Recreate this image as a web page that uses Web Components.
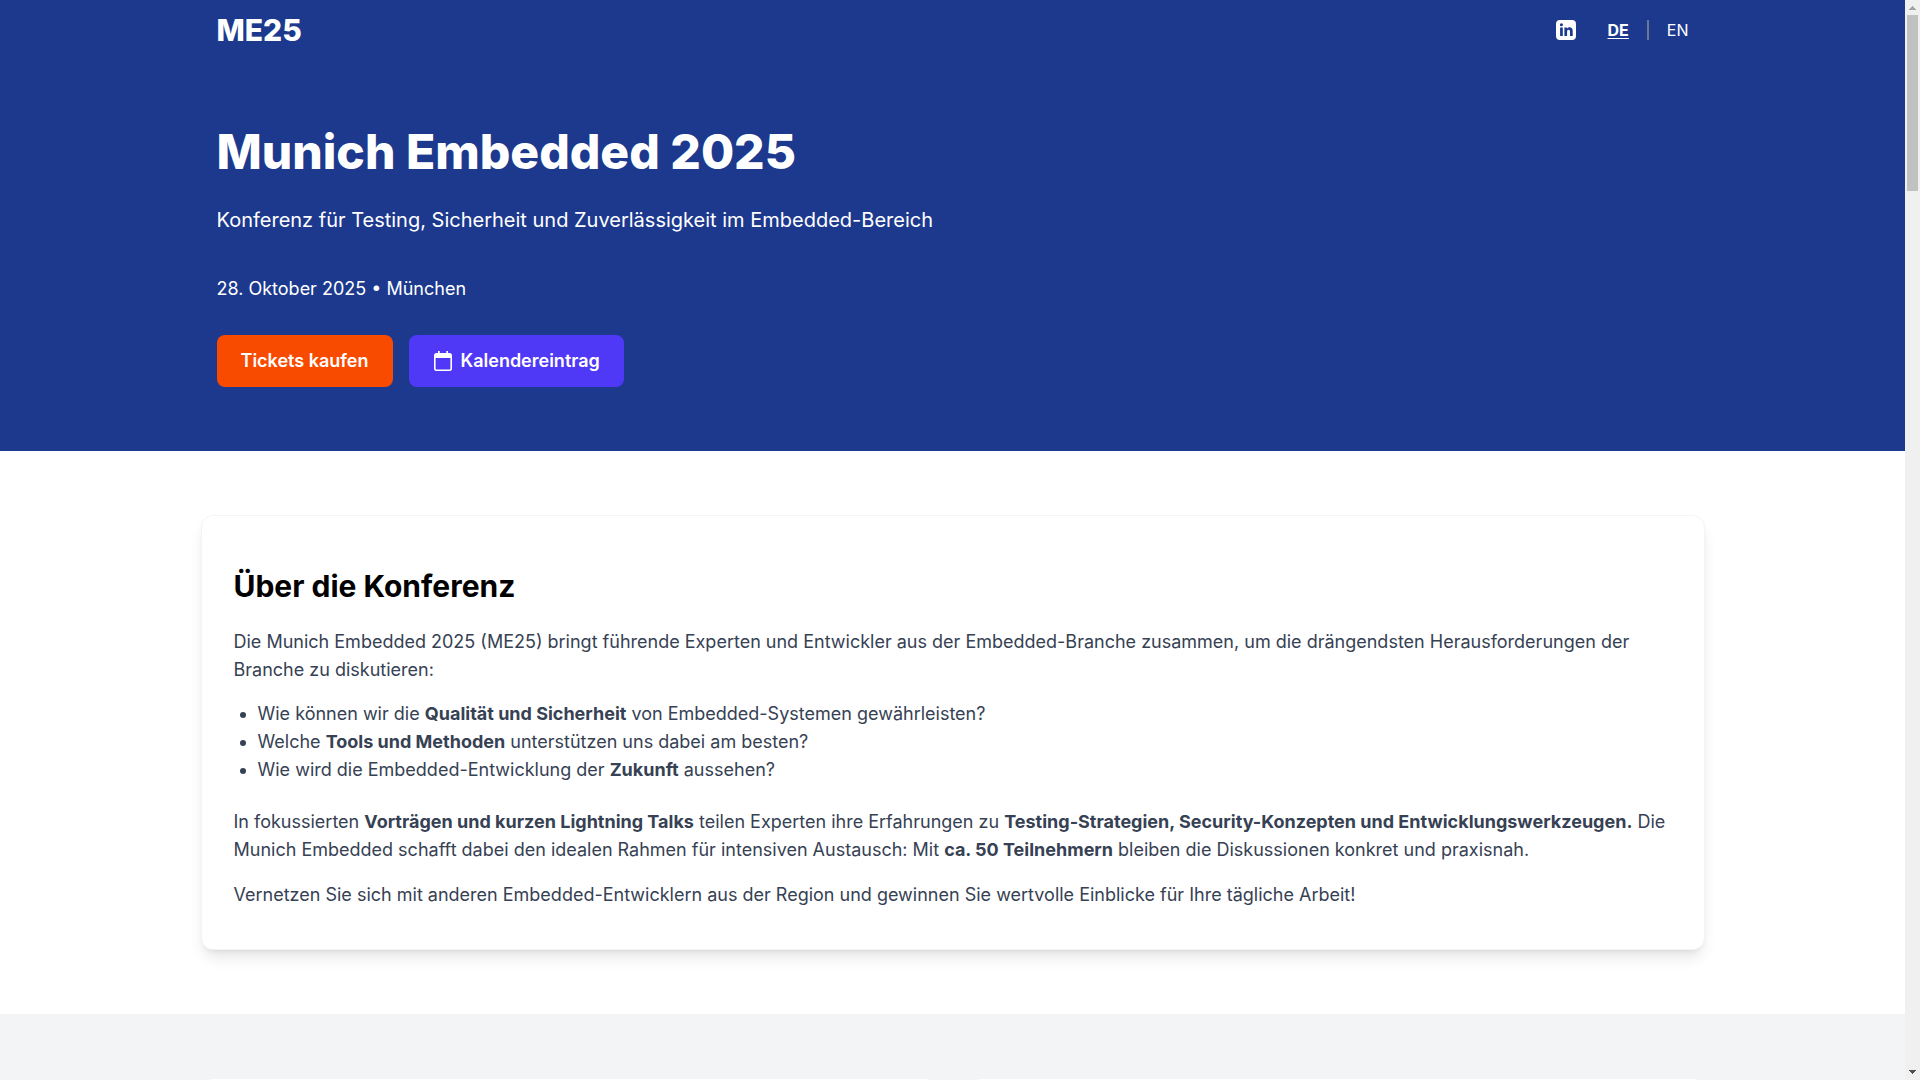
<!DOCTYPE html>
<html lang="de">
<head>
<meta charset="utf-8">
<title>Munich Embedded 2025</title>
<style>
html, body { margin: 0; height: 100%; }
body { font-family: Inter, "Liberation Sans", sans-serif; font-size: 18px; line-height: 28px; background: #fff; overflow: hidden; }
</style>
</head>
<body>
<conference-page></conference-page>
<script>
const define = (name, html) => {
  const template = document.createElement('template');
  template.innerHTML = html;
  customElements.define(name, class extends HTMLElement {
    constructor() {
      super();
      this.attachShadow({ mode: 'open' }).append(template.content.cloneNode(true));
    }
  });
};

define('page-container', `
<style>
:host { display: block; box-sizing: border-box; width: 100%; max-width: 1536px; margin: 0 auto; padding: 0 var(--gutter, 16px); }
</style><slot></slot>`);

define('site-header', `
<style>
:host { display: block; background: #1c398e; color: #fff; --gutter: 32px; }
.bar { display: flex; align-items: center; justify-content: space-between; height: 60px; }
a { color: inherit; text-decoration: none; }
.brand { font-size: 30px; line-height: 36px; font-weight: 800; }
nav { display: flex; align-items: center; gap: 32px; font-size: 16px; line-height: 20px; }
.social, svg { display: block; }
.lang { display: flex; align-items: center; }
.lang a + a { border-left: 2px solid #6a7692; margin-left: 18px; padding-left: 18px; }
.lang a[aria-current] { font-weight: 700; text-decoration: underline; text-underline-offset: 2px; }
</style>
<page-container><div class="bar">
<a class="brand" href="#">ME25</a>
<nav>
<a class="social" href="#" aria-label="LinkedIn"><svg width="20" height="20" viewBox="0 0 20 20"><path fill="#fff" fill-rule="evenodd" d="M4 0h12a4 4 0 0 1 4 4v12a4 4 0 0 1-4 4H4a4 4 0 0 1-4-4V4a4 4 0 0 1 4-4ZM4.100 7.500V16H6.800V7.500ZM5.450 3.200a1.550 1.550 0 1 0 0 3.100a1.550 1.550 0 0 0 0-3.100ZM8.400 7.500V16H11.100V11.600C11.100 10.400 11.600 9.700 12.600 9.700C13.600 9.700 14 10.400 14 11.600V16H16.700V11C16.700 8.600 15.500 7.300 13.600 7.300C12.400 7.300 11.500 7.900 11 8.700V7.500Z"/></svg></a>
<div class="lang"><a href="#de" aria-current="true">DE</a><a href="#en">EN</a></div>
</nav>
</div></page-container>`);

define('action-link', `
<style>
:host { display: block; }
a { display: flex; align-items: center; gap: 8px; padding: 12px 24px; border-radius: 8px; background: var(--action-bg); color: #fff; font-weight: 600; text-decoration: none; }
</style><a href="#"><slot name="icon"></slot><slot></slot></a>`);

define('hero-banner', `
<style>
:host { display: block; background: #1c398e; color: #fff; --gutter: 32px; }
.hero { padding: 64px 0; }
h1 { margin: 0 0 26px; font-size: 48px; line-height: 56px; font-weight: 800; }
p { margin: 0; }
.lead { font-size: 20px; margin-bottom: 41px; }
.actions { display: flex; gap: 16px; margin-top: 32px; }
.tickets { --action-bg: #f94b00; }
.calendar { --action-bg: #4f39f6; }
svg { display: block; }
</style>
<page-container><div class="hero">
<h1>Munich Embedded 2025</h1>
<p class="lead">Konferenz für Testing, Sicherheit und Zuverlässigkeit im Embedded-Bereich</p>
<p>28. Oktober 2025 • München</p>
<div class="actions">
<action-link class="tickets">Tickets kaufen</action-link>
<action-link class="calendar"><svg slot="icon" width="20" height="20" viewBox="0 0 20 20"><path fill="#fff" fill-rule="evenodd" d="M5 0h1.700v2h6.600V0H15v2h1.500A2.500 2.500 0 0 1 19 4.500v13A2.500 2.500 0 0 1 16.500 20h-13A2.500 2.500 0 0 1 1 17.500v-13A2.500 2.500 0 0 1 3.500 2H5ZM2.600 7v10.400c0 .6.400 1 1 1h12.800c.6 0 1-.4 1-1V7Z"/></svg>Kalendereintrag</action-link>
</div>
</div></page-container>`);

define('content-card', `
<style>
:host { display: block; background: #fff; border: 1px solid #f3f4f6; border-radius: 12px; padding: 40px 32px; color: #364153;
box-shadow: 0 10px 15px -3px rgba(0,0,0,.1), 0 4px 6px -4px rgba(0,0,0,.1); }
</style><slot></slot>`);

define('about-section', `
<style>
:host { display: block; padding: 64px 0; background: #fff; }
h2 { margin: 0 0 12px; font-size: 30px; line-height: 60px; font-weight: 700; color: #000; }
p { margin: 0 0 17px; }
p:last-child { margin-bottom: 0; }
ul { margin: -1px 0 24px; padding-left: 24px; }
strong { font-weight: 700; }
</style>
<page-container><content-card>
<h2>Über die Konferenz</h2>
<p>Die Munich Embedded 2025 (ME25) bringt führende Experten und Entwickler aus der Embedded-Branche zusammen, um die drängendsten Herausforderungen der Branche zu diskutieren:</p>
<ul>
<li>Wie können wir die <strong>Qualität und Sicherheit</strong> von Embedded-Systemen gewährleisten?</li>
<li>Welche <strong>Tools und Methoden</strong> unterstützen uns dabei am besten?</li>
<li>Wie wird die Embedded-Entwicklung der <strong>Zukunft</strong> aussehen?</li>
</ul>
<p>In fokussierten <strong>Vorträgen und kurzen Lightning Talks</strong> teilen Experten ihre Erfahrungen zu <strong>Testing-Strategien, Security-Konzepten und Entwicklungswerkzeugen.</strong> Die Munich Embedded schafft dabei den idealen Rahmen für intensiven Austausch: Mit <strong>ca. 50 Teilnehmern</strong> bleiben die Diskussionen konkret und praxisnah.</p>
<p>Vernetzen Sie sich mit anderen Embedded-Entwicklern aus der Region und gewinnen Sie wertvolle Einblicke für Ihre tägliche Arbeit!</p>
</content-card></page-container>`);

define('card-section', `
<style>
:host { display: block; padding: 64px 0; background: #f3f4f6; }
.grid { display: grid; grid-template-columns: 1fr 1fr; gap: 32px; }
</style>
<page-container><div class="grid"><content-card></content-card><content-card></content-card></div></page-container>`);

define('scroll-rail', `
<style>
:host { display: flex; flex-direction: column; align-items: center; box-sizing: border-box; width: 15px; padding: 6px 0 6px; background: #f0f0f0; }
svg { display: block; flex: none; }
.thumb { width: 11px; height: 176px; margin-top: 5px; background: #c1c1c1; }
.down { margin-top: auto; }
</style>
<svg width="7" height="4" viewBox="0 0 7 4" shape-rendering="crispEdges"><path fill="#a3a3a3" d="M3 0h1v1h1v1h1v1h1v1H0V3h1V2h1V1h1Z"/></svg>
<div class="thumb"></div>
<svg class="down" width="7" height="4" viewBox="0 0 7 4" shape-rendering="crispEdges"><path fill="#505050" d="M0 0h7v1H6v1H5v1H4v1H3V3H2V2H1V1H0Z"/></svg>`);

define('conference-page', `
<style>
:host { display: flex; height: 100vh; }
main { flex: 1; min-width: 0; overflow: hidden; }
</style>
<main><site-header></site-header><hero-banner></hero-banner><about-section></about-section><card-section></card-section></main>
<scroll-rail aria-hidden="true"></scroll-rail>`);
</script>
</body>
</html>
